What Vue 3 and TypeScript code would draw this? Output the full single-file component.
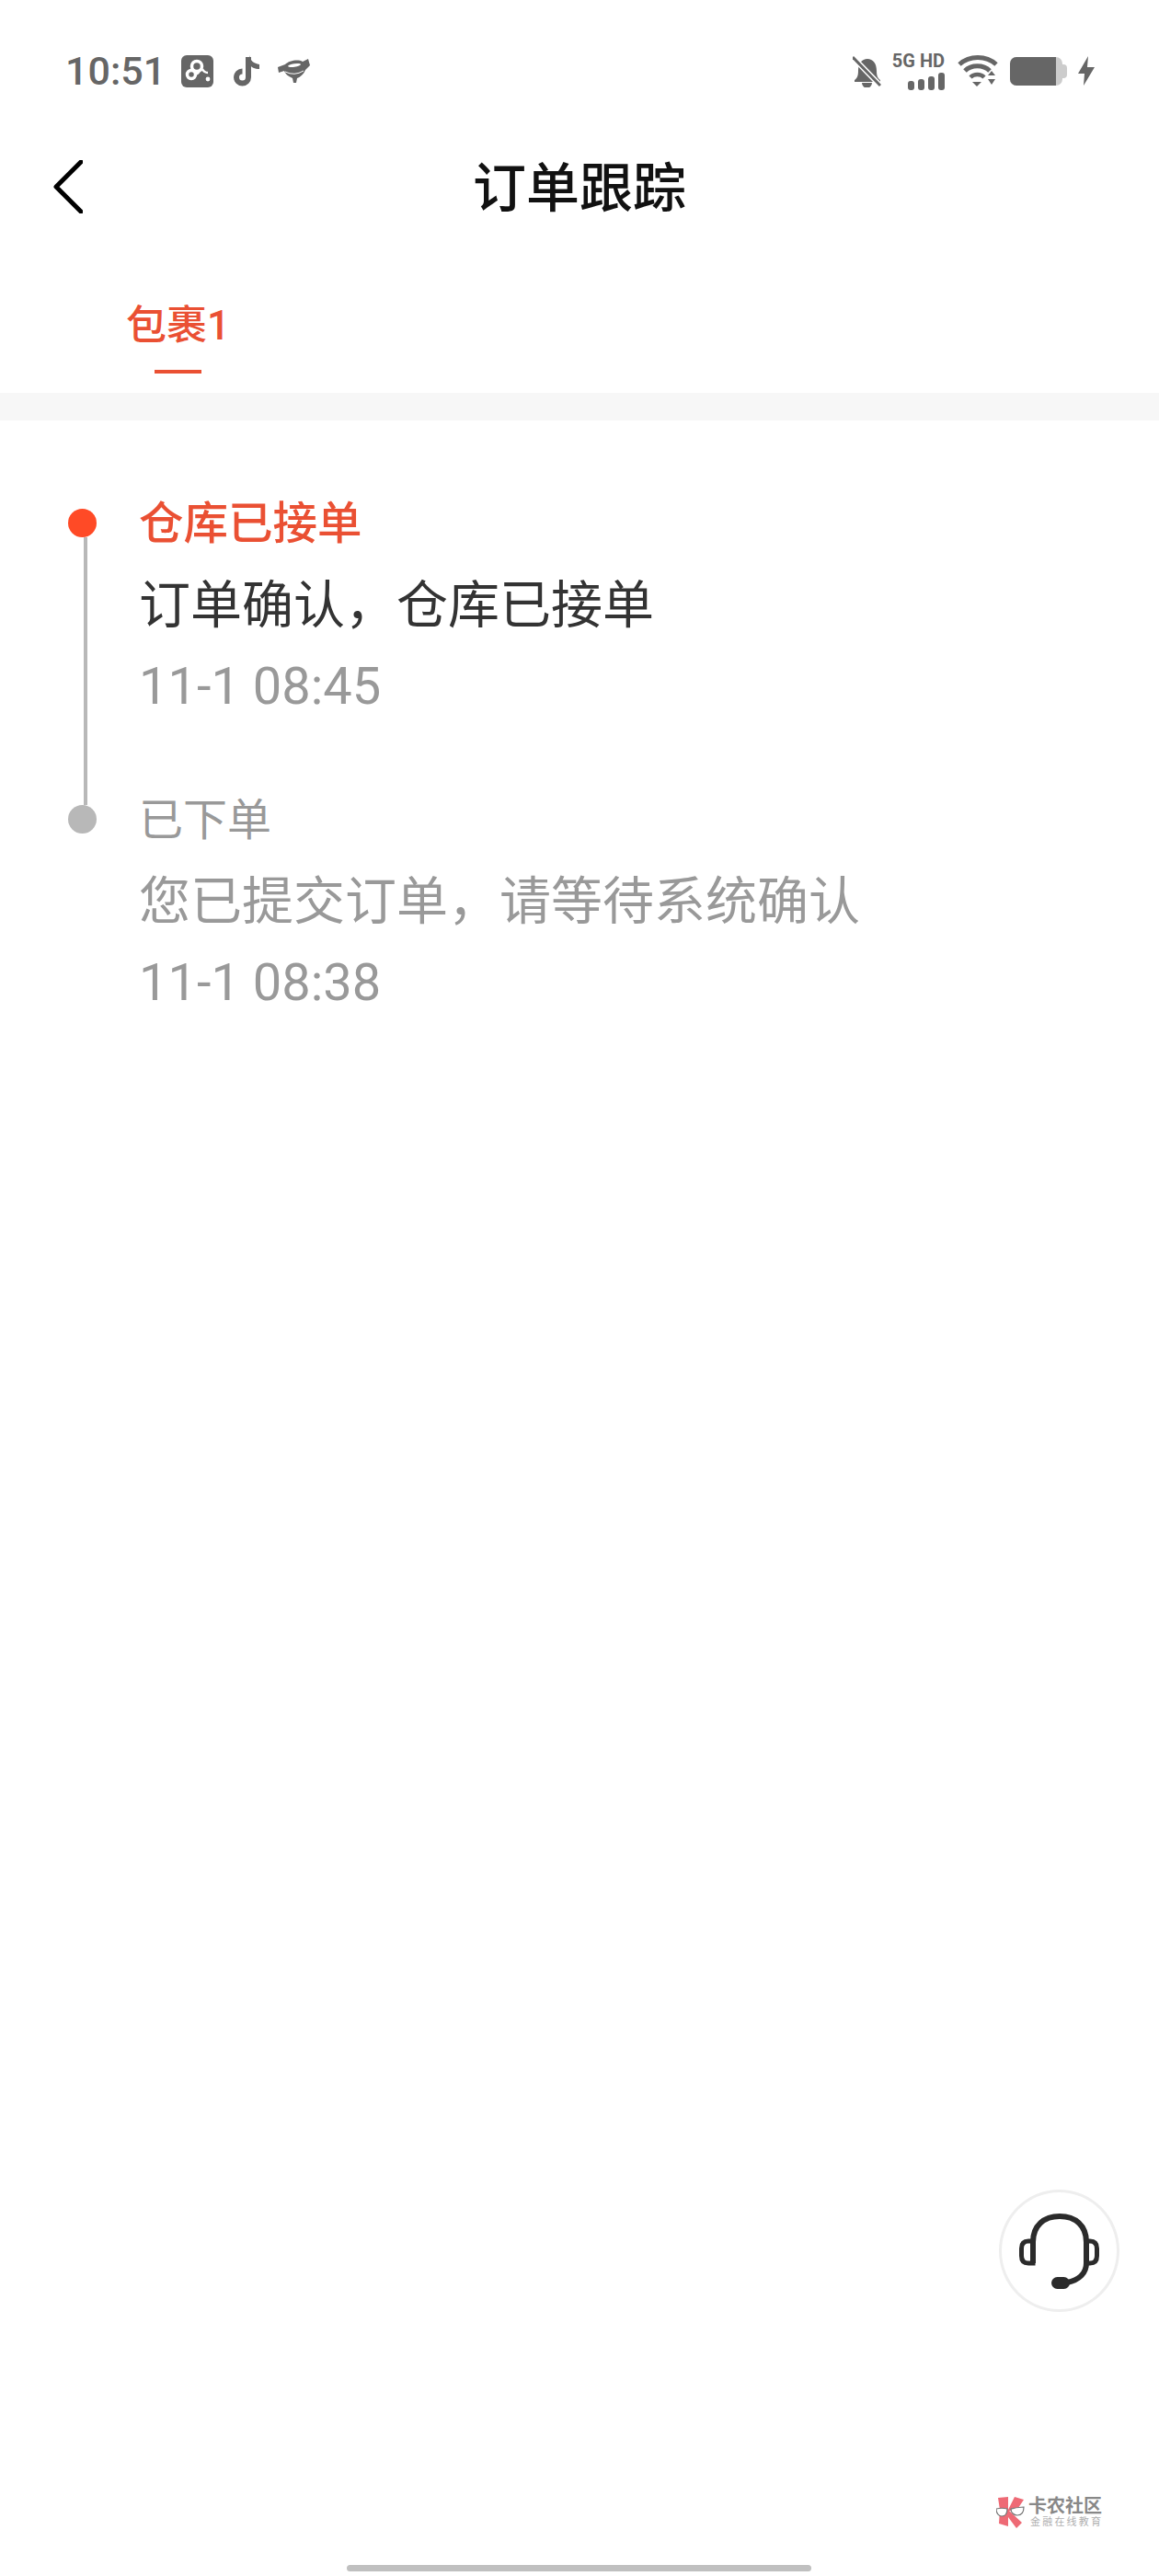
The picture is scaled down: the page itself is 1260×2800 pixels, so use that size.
<template>
  <div class="page">
    <div class="status-bar">
      <span class="clock">10:51</span>
      <svg class="ic-app" width="35" height="35" viewBox="0 0 35 35">
        <rect width="35" height="35" rx="6" fill="#666" />
        <circle cx="11" cy="21" r="4.5" fill="none" stroke="#fff" stroke-width="3.5" />
        <circle cx="17" cy="12" r="5.5" fill="none" stroke="#fff" stroke-width="3.5" />
        <path d="M14 21q4 0 6-4M23 15q2 4 6 4M21 17l2-2" fill="none" stroke="#fff" stroke-width="2.4" />
        <circle cx="29" cy="26" r="2.4" fill="#fff" />
      </svg>
      <svg class="ic-note" width="31" height="35" viewBox="0 0 31 35">
        <path d="M18 2v22a6.5 6.5 0 1 1-6.5-6.5" fill="none" stroke="#666" stroke-width="6" />
        <path d="M19 0c1 6 5 9 11 10v5c-5 0-9-2-11-5z" fill="#666" />
      </svg>
      <svg class="ic-bird" width="35" height="27" viewBox="0 0 35 27">
        <path d="M0 9L8 6C12 2 22 0 27 3L33 0L35 7L30 12C28 17 24 20 21 21L20 26H17L16 21C11 19 8 16 7 13L1 15Z" fill="#666" />
        <ellipse cx="18" cy="7" rx="7" ry="1.8" fill="#fff" transform="rotate(-8 18 7)" />
        <path d="M8 14q10 5 20-1" fill="none" stroke="#fff" stroke-width="1" />
      </svg>
      <div class="status-right">
        <svg width="31" height="35" viewBox="0 0 31 35">
          <path d="M2 27c3-2 4-5 4-10 0-8 4-13 10-13s10 5 10 13c0 5 1 8 4 10v2H2z" fill="#666" />
          <path d="M10 30a5.500 5.500 0 0 0 11 0z" fill="#666" />
          <path d="M1 3l29 30" stroke="#fff" stroke-width="6" />
          <path d="M0 2l30 31" stroke="#666" stroke-width="3" />
        </svg>
        <div class="net">
          <span class="net-label">5G HD</span>
          <div class="bars">
            <i style="height: 10px"></i><i style="height: 12px"></i><i style="height: 15px"></i><i style="height: 19px"></i>
          </div>
        </div>
        <svg width="44" height="34" viewBox="0 0 44 34">
          <path d="M2 10c11-10 29-10 40 0" fill="none" stroke="#666" stroke-width="5" />
          <path d="M8 17c7-7 20-7 27 0" fill="none" stroke="#666" stroke-width="5" />
          <path d="M14 24c4-4 11-4 15 0" fill="none" stroke="#666" stroke-width="4.500" />
          <path d="M16 29h10l-5 5z" fill="#666" />
          <path d="M33 22l4-5 4 5zM33 26h8l-4 6z" fill="#666" />
        </svg>
        <div class="battery">
          <div class="battery-body"><div class="battery-fill"></div></div>
          <div class="battery-nub"></div>
        </div>
        <svg width="18" height="32" viewBox="0 0 18 32">
          <path d="M11 0L0 19h7l-1 13 12-20h-8z" fill="#666" />
        </svg>
      </div>
    </div>

    <div class="nav">
      <svg class="back" width="32" height="58" viewBox="0 0 32 58">
        <path d="M30 2L3 29l27 27" fill="none" stroke="#000" stroke-width="5" stroke-linecap="round" stroke-linejoin="round" />
      </svg>
      <h1>订单跟踪</h1>
    </div>

    <div class="tabs">
      <div class="tab">
        <span>包裹1</span>
        <i></i>
      </div>
    </div>
    <div class="band"></div>

    <div class="timeline">
      <div v-for="(step, i) in steps" :key="step.title" class="step" :class="{ active: i === 0 }">
        <div class="dot"></div>
        <div class="info">
          <div class="step-title">{{ step.title }}</div>
          <div class="step-desc">{{ step.desc }}</div>
          <div class="step-time">{{ step.time }}</div>
        </div>
      </div>
    </div>

    <div class="service">
      <svg width="87" height="82" viewBox="0 0 87 82">
        <path d="M15 54V31C15 13 27 3 44 3s29 10 29 28v23C73 64 66 72 52 75" fill="none" stroke="#2b2b2b" stroke-width="6" />
        <path d="M15 30H10C5 30 2.500 33 2.500 38v8c0 5 2.500 8 7.500 8h5z" fill="none" stroke="#2b2b2b" stroke-width="5" />
        <path d="M73 30h4c5 0 7.500 3 7.500 8v8c0 5-2.500 8-7.500 8h-4" fill="none" stroke="#2b2b2b" stroke-width="5" />
        <rect x="35" y="69" width="20" height="13" rx="6.500" fill="#2b2b2b" />
      </svg>
    </div>

    <div class="watermark">
      <svg width="31" height="34" viewBox="0 0 31 34">
        <path d="M2 1L13 0V14L20 0L30 3L22 15H14L28 28L22 34L13 22V32L3 29L4 14Z" fill="#ee6a75" />
        <path d="M0 13c4-1 8-1 12 0 0 5-2 8-6 8-3 0-6-3-6-8zM16 13c5-1 9-2 14-2 0 6-3 9-7 9-4 0-7-3-7-7z" fill="#fff" stroke="#777" stroke-width="1.200" />
      </svg>
      <div class="wm-text">
        <b>卡农社区</b>
        <small>金融在线教育</small>
      </div>
    </div>

    <div class="home-bar"></div>
  </div>
</template>

<script setup lang="ts">
type Step = {
  title: string;
  desc: string;
  time: string;
};

const steps: Step[] = [
  { title: '仓库已接单', desc: '订单确认，仓库已接单', time: '11-1 08:45' },
  { title: '已下单', desc: '您已提交订单，请等待系统确认', time: '11-1 08:38' },
];
</script>

<style>
body {
  background: #fff;
}
</style>

<style scoped>
.page {
  position: relative;
  width: 1260px;
  height: 2800px;
  overflow: hidden;
  background: #fff;
  font-family: Roboto, "Noto Sans CJK SC", sans-serif;
}

.status-bar {
  display: flex;
  align-items: center;
  height: 130px;
  padding: 38px 70px 14px 71px;
  box-sizing: border-box;
  color: #666;
}

.clock {
  width: 126px;
  font-size: 43px;
  font-weight: 500;
  line-height: 78px;
}

.ic-note {
  margin-left: 20px;
}

.ic-bird {
  margin-left: 19px;
}

.status-right {
  display: flex;
  align-items: center;
  margin-left: auto;
}

.net {
  display: flex;
  flex-direction: column;
  align-items: flex-end;
  width: 58px;
  margin: 0 14px 0 11px;
}

.net-label {
  font-size: 20px;
  font-weight: 700;
  line-height: 19px;
  white-space: nowrap;
}

.bars {
  display: flex;
  align-items: flex-end;
  gap: 4px;
  margin-top: 3px;
}

.bars i {
  display: block;
  width: 7px;
  border-radius: 3px;
  background: #666;
}

.battery {
  display: flex;
  align-items: center;
  margin: 0 12px 0 13px;
}

.battery-body {
  width: 57px;
  height: 31px;
  border-radius: 7px;
  background: #ccc;
  overflow: hidden;
}

.battery-fill {
  width: 50px;
  height: 100%;
  background: #666;
}

.battery-nub {
  width: 5px;
  height: 15px;
  border-radius: 0 4px 4px 0;
  background: #ccc;
}

.nav {
  display: flex;
  align-items: center;
  justify-content: center;
  position: relative;
  height: 146px;
}

.nav h1 {
  margin: 0 0 6px;
  font-size: 58px;
  font-weight: 500;
  color: #111;
}

.back {
  position: absolute;
  left: 58px;
  top: 44px;
}

.tabs {
  display: flex;
  height: 151px;
  padding-left: 137px;
}

.tab {
  display: flex;
  flex-direction: column;
  align-items: center;
  padding-top: 50px;
  color: #ea5033;
  font-size: 44px;
  font-weight: 500;
  line-height: 56px;
}

.tab i {
  display: block;
  width: 51px;
  height: 4px;
  margin-top: 20px;
  background: #ea5033;
}

.band {
  height: 30px;
  background: #f7f7f7;
}

.timeline {
  display: flex;
  flex-direction: column;
  gap: 56px;
  padding: 67px 0 0 74px;
}

.step {
  display: flex;
  position: relative;
  gap: 46px;
}

.step.active::after {
  content: "";
  position: absolute;
  left: 17px;
  top: 60px;
  width: 4px;
  height: 291px;
  background: #b8b8b8;
}

.dot {
  flex: none;
  width: 31px;
  height: 31px;
  margin-top: 29px;
  border-radius: 50%;
  background: #b8b8b8;
}

.active .dot {
  background: #ff4a26;
}

.info {
  padding-top: 2px;
  line-height: 88px;
  white-space: nowrap;
}

.step-title {
  font-size: 48px;
  color: #999;
}

.step-desc {
  font-size: 56px;
  color: #999;
}

.step-time {
  font-size: 56px;
  color: #999;
}

.active .step-title {
  font-size: 48.5px;
  font-weight: 500;
  color: #ea5033;
}

.active .step-desc {
  color: #333;
}

.service {
  position: absolute;
  left: 1086px;
  top: 2380px;
  display: flex;
  align-items: center;
  justify-content: center;
  width: 131px;
  height: 133px;
  box-sizing: border-box;
  border: 3px solid #eee;
  border-radius: 50%;
  background: #fff;
}

.watermark {
  position: absolute;
  left: 1083px;
  top: 2713px;
  display: flex;
  align-items: center;
  gap: 4px;
}

.wm-text {
  display: flex;
  flex-direction: column;
  color: #888;
}

.wm-text b {
  font-size: 20px;
  line-height: 22px;
  font-weight: 700;
  white-space: nowrap;
}

.wm-text small {
  margin-left: 2px;
  font-size: 11px;
  line-height: 13px;
  letter-spacing: 2.2px;
  color: #b0b0b0;
  white-space: nowrap;
}

.home-bar {
  position: absolute;
  left: 377px;
  top: 2788px;
  width: 505px;
  height: 7px;
  border-radius: 4px;
  background: #c0c0c0;
}
</style>
